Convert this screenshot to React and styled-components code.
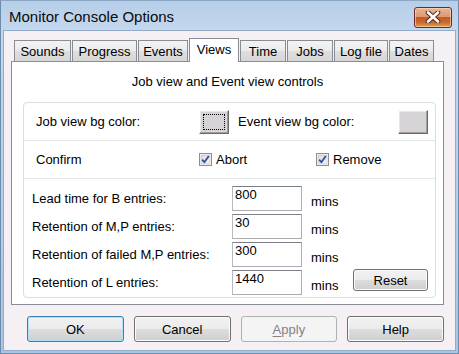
import React from 'react'
import styled, { createGlobalStyle, css } from 'styled-components'

const GlobalStyle = createGlobalStyle`
  body {
    margin: 0;
    font-family: "Liberation Sans", Arial, sans-serif;
    font-size: 13px;
    color: #000;
  }
`;

const Window = styled.div`
  width: 459px;
  height: 354px;
  box-sizing: border-box;
  display: flex;
  flex-direction: column;
  background: linear-gradient(#b6cee8 0px, #c4d8ee 30px, #a9c6e6 100%);
  border: 1px solid #6d8bab;
  border-top-color: #8aa6c4;
  padding: 0 2px 2px 2px;
`;

const TitleBar = styled.div`
  height: 29px;
  display: flex;
  align-items: center;
  justify-content: space-between;
  padding: 0 4px 0 6px;
`;

const Title = styled.span`
  font-size: 15px;
  color: #0a0a0a;
  margin-top: 2px;
`;

const CloseButton = styled.div`
  width: 38px;
  height: 21px;
  box-sizing: border-box;
  margin-top: 3px;
  border: 1px solid #6b2a26;
  border-radius: 3px;
  display: flex;
  align-items: center;
  justify-content: center;
  background: linear-gradient(#e8b597 0%, #dc9a72 45%, #c55a22 50%, #c9692c 75%, #e0a050 100%);
  box-shadow: inset 0 0 0 1px rgba(255, 220, 190, 0.6);
`;

const Body = styled.div`
  flex: 1;
  background: #f4f0f4;
  border: 1px solid #93abc6;
  padding: 7px 11px 0 7px;
  display: flex;
  flex-direction: column;
`;

const TabRow = styled.div`
  display: flex;
  align-items: flex-end;
  gap: 1px;
  height: 23px;
  padding-left: 3px;
`;

const Tab = styled.div`
  width: ${p => p.$w}px;
  height: 21px;
  box-sizing: border-box;
  border: 1px solid #898c95;
  border-bottom: none;
  display: flex;
  align-items: center;
  justify-content: center;
  background: linear-gradient(#f3f3f3 0%, #ebebeb 50%, #dedede 51%, #d6d6d6 100%);
  ${p => p.$active && css`
    height: 24px;
    margin-bottom: -1px;
    background: #fff;
    position: relative;
    z-index: 1;
    padding-bottom: 3px;
  `}
`;

const Panel = styled.div`
  height: 244px;
  box-sizing: border-box;
  border: 1px solid #898c95;
  background: #fff;
  display: flex;
  flex-direction: column;
`;

const Heading = styled.div`
  height: 40px;
  line-height: 40px;
  text-align: center;
`;

const GroupBox = styled.div`
  margin: 0 7px 6px 11px;
  flex: 1;
  border: 1px solid #d9dfe5;
  border-radius: 4px;
  display: flex;
  flex-direction: column;
`;

const OptionRow = styled.div`
  height: 37px;
  display: flex;
  align-items: center;
  padding-left: 12px;
  border-bottom: 1px solid #e2e7ec;
`;

const Label = styled.span`
  width: ${p => p.$w}px;
  flex: none;
`;

const ColorButton = styled.div`
  width: 30px;
  height: 24px;
  box-sizing: border-box;
  flex: none;
  margin-right: ${p => p.$mr || 0}px;
  background: #d6d4d6;
  border: 1px solid;
  border-color: #fff #6a6a6a #6a6a6a #fff;
  box-shadow: inset -1px -1px 0 #a0a0a0, inset 1px 1px 0 #e8e8e8;
  padding: 3px;
  &::after {
    content: '';
    display: ${p => (p.$focus ? 'block' : 'none')};
    width: 100%;
    height: 100%;
    box-sizing: border-box;
    border: 1px dotted #000;
  }
`;

const Check = styled.label`
  width: ${p => p.$w}px;
  flex: none;
  display: flex;
  align-items: center;
  gap: 4px;
  svg { flex: none; }
`;

const Entries = styled.div`
  display: flex;
  flex-direction: column;
  gap: 3px;
  padding: 7px 0 0 8px;
`;

const EntryRow = styled.div`
  display: flex;
  align-items: center;
  height: 25px;
`;

const TextBox = styled.input`
  width: 70px;
  height: 25px;
  box-sizing: border-box;
  flex: none;
  margin: 0;
  border: 1px solid #abadb3;
  border-top-color: #7a7f87;
  border-left-color: #b5b9c0;
  padding: 0 2px 9px;
  font: 13px "Liberation Sans", Arial, sans-serif;
  color: #000;
  background: #fff;
  outline: none;
`;

const Unit = styled.span`
  margin: 6px 0 0 9px;
  width: 41px;
`;

const PushButton = styled.button`
  width: ${p => p.$w}px;
  height: ${p => p.$h}px;
  box-sizing: border-box;
  padding: 0;
  margin: 0;
  font: 13px "Liberation Sans", Arial, sans-serif;
  color: #000;
  border: 1px solid #707070;
  border-radius: 3px;
  background: linear-gradient(#f2f2f2 0%, #ebebeb 50%, #dddddd 51%, #cfcfcf 100%);
  box-shadow: inset 0 0 0 1px #fbfbfb;
  ${p => p.$default && css`
    border-color: #3c7fb1;
    box-shadow: inset 0 0 0 1px #aee0f8;
  `}
  &:disabled {
    border-color: #adb2b5;
    background: #f4f4f4;
    box-shadow: none;
    color: #838383;
  }
  u { text-decoration-thickness: 1px; text-underline-offset: 2px; }
`;

const ResetButton = styled(PushButton)`
  margin: -1px 0 0 1px;
  align-self: flex-start;
`;

const ButtonBar = styled.div`
  display: flex;
  gap: 10px;
  padding: 11px 0 0 16px;
`;

function CheckIcon() {
  return (
    <svg width="13" height="13" viewBox="0 0 13 13">
      <defs>
        <linearGradient id="cb" x1="0" y1="0" x2="1" y2="1">
          <stop offset="0" stopColor="#dcdcdc" />
          <stop offset="1" stopColor="#f6f6f6" />
        </linearGradient>
      </defs>
      <rect x="0.5" y="0.5" width="12" height="12" fill="#fff" stroke="#8e8f8f" />
      <rect x="2" y="2" width="9" height="9" fill="url(#cb)" stroke="#b9b9b9" strokeWidth="0.6" />
      <path d="M3.2 6.6 L5.4 9.3 L9.8 2.9" fill="none" stroke="#2f4fa0" strokeWidth="1.8" strokeLinejoin="round" />
    </svg>
  )
}

function CloseIcon() {
  return (
    <svg width="16" height="12" viewBox="0 0 16 12">
      <path d="M3 1.5 L13 10.5 M13 1.5 L3 10.5" stroke="#5a2a1a" strokeWidth="4.6" strokeLinecap="round" />
      <path d="M3 1.5 L13 10.5 M13 1.5 L3 10.5" stroke="#fff" strokeWidth="2.6" strokeLinecap="round" />
    </svg>
  )
}

const tabs = [
  ['Sounds', 57], ['Progress', 65], ['Events', 50], ['Views', 50],
  ['Time', 46], ['Jobs', 46], ['Log file', 54], ['Dates', 45],
]

const entries = [
  ['Lead time for B entries:', '800'],
  ['Retention of M,P entries:', '30'],
  ['Retention of failed M,P entries:', '300'],
  ['Retention of L entries:', '1440'],
]

export default function App() {
  return (
    <>
      <GlobalStyle />
      <Window>
        <TitleBar>
          <Title>Monitor Console Options</Title>
          <CloseButton><CloseIcon /></CloseButton>
        </TitleBar>
        <Body>
          <TabRow>
            {tabs.map(([name, w]) => (
              <Tab key={name} $w={w} $active={name === 'Views'}>{name}</Tab>
            ))}
          </TabRow>
          <Panel>
            <Heading>Job view and Event view controls</Heading>
            <GroupBox>
              <OptionRow>
                <Label $w={163}>Job view bg color:</Label>
                <ColorButton $focus $mr={9} />
                <Label $w={160}>Event view bg color:</Label>
                <ColorButton />
              </OptionRow>
              <OptionRow>
                <Label $w={163}>Confirm</Label>
                <Check $w={117}><CheckIcon />Abort</Check>
                <Check $w={90}><CheckIcon />Remove</Check>
              </OptionRow>
              <Entries>
                {entries.map(([label, value], i) => (
                  <EntryRow key={label}>
                    <Label $w={200}>{label}</Label>
                    <TextBox readOnly defaultValue={value} />
                    <Unit>mins</Unit>
                    {i === entries.length - 1 && (
                      <ResetButton $w={75} $h={22}>Reset</ResetButton>
                    )}
                  </EntryRow>
                ))}
              </Entries>
            </GroupBox>
          </Panel>
          <ButtonBar>
            <PushButton $w={97} $h={26} $default>OK</PushButton>
            <PushButton $w={97} $h={26}>Cancel</PushButton>
            <PushButton $w={97} $h={26} disabled><u>A</u>pply</PushButton>
            <PushButton $w={97} $h={26}>Help</PushButton>
          </ButtonBar>
        </Body>
      </Window>
    </>
  )
}
